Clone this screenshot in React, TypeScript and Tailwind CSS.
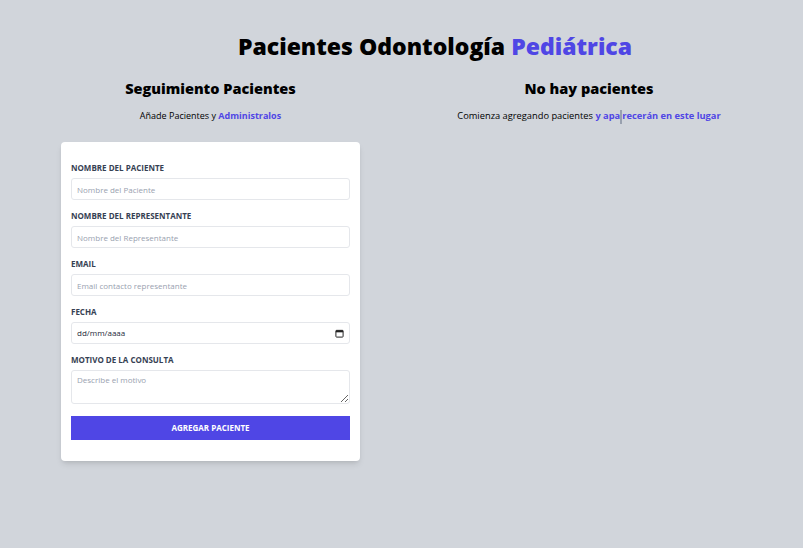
import React, { useState } from "react";

const font = { fontFamily: '"Open Sans", "Noto Sans", sans-serif' };

function Campo({ label, children }: { label: string; children: React.ReactNode }) {
  return (
    <div className="mb-[12px]">
      <label className="block text-[8px] font-bold uppercase text-gray-700 leading-none mb-[6px]">{label}</label>
      {children}
    </div>
  );
}

export default function App() {
  const [nombre, setNombre] = useState("");
  const [rep, setRep] = useState("");
  const [email, setEmail] = useState("");
  const [motivo, setMotivo] = useState("");

  const input = "block w-full h-[22px] border border-gray-200 rounded-[3px] px-[5px] text-[8px] bg-white placeholder-gray-400 outline-none";

  return (
    <div className="min-h-[548px] bg-[#d1d5db] text-black" style={font}>
      <h1 className="pt-[29px] pl-[67px] text-center text-[23px] font-black leading-[34px]">
        Pacientes Odontología <span className="text-[#4f46e5]">Pediátrica</span>
      </h1>

      <div className="flex mt-[16px]">
        {/* formulario */}
        <div className="w-[299px] ml-[61px]">
          <h2 className="text-center text-[14.5px] font-black leading-[20px]">Seguimiento Pacientes</h2>
          <p className="text-center text-[9px] mt-[11px] leading-[12px]">
            Añade Pacientes y <span className="text-[#4f46e5] font-bold">Administralos</span>
          </p>

          <form className="bg-white rounded-[4px] shadow-md mt-[20px] pt-[22px] pb-[21px] px-[10px]">
            <Campo label="Nombre del Paciente">
              <input className={input} placeholder="Nombre del Paciente" value={nombre} onChange={e => setNombre(e.target.value)} />
            </Campo>
            <Campo label="Nombre del Representante">
              <input className={input} placeholder="Nombre del Representante" value={rep} onChange={e => setRep(e.target.value)} />
            </Campo>
            <Campo label="Email">
              <input className={input} placeholder="Email contacto representante" value={email} onChange={e => setEmail(e.target.value)} />
            </Campo>
            <Campo label="Fecha">
              <div className={input + " flex items-center justify-between text-gray-800"}>
                <span>dd/mm/aaaa</span>
                <svg width="9" height="9" viewBox="0 0 10 10">
                  <rect x="1" y="1.5" width="8" height="7.5" rx="0.8" fill="none" stroke="#222" strokeWidth="1.1" />
                  <rect x="1" y="1.5" width="8" height="2.2" fill="#222" />
                </svg>
              </div>
            </Campo>
            <Campo label="Motivo de la Consulta">
              <textarea
                className="w-full h-[34px] block border border-gray-200 rounded-[3px] px-[5px] pt-[3px] text-[8px] placeholder-gray-400 outline-none"
                placeholder="Describe el motivo"
                value={motivo}
                onChange={e => setMotivo(e.target.value)}
              />
            </Campo>
            <button type="button" className="block w-full h-[24px] mt-[1px] bg-[#4f46e5] text-white text-[8px] font-bold uppercase">
              Agregar Paciente
            </button>
          </form>
        </div>

        {/* listado */}
        <div className="flex-1 ml-[20px] mr-[5px] text-center">
          <h2 className="text-[14.5px] font-black leading-[20px]">No hay pacientes</h2>
          <p className="text-[9.3px] mt-[11px] leading-[12px]">
            Comienza agregando pacientes <span className="text-[#4f46e5] font-bold">y apa<span className="inline-block w-[2px] h-[14px] bg-gray-400 align-middle -my-[3px]"></span>recerán en este lugar</span>
          </p>
        </div>
      </div>
    </div>
  );
}
